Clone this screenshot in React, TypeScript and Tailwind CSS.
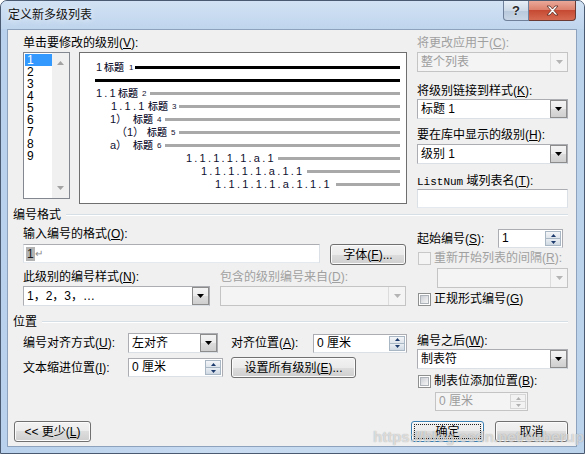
import React from "react";
import clsx from "clsx";

function K({ c }: { c: string }) {
  return (
    <>
      (<u>{c}</u>)
    </>
  );
}

function Label({ children, dim }: { children: React.ReactNode; dim?: boolean }) {
  return (
    <div className={clsx("h-[14px] whitespace-nowrap leading-[14px]", dim && "text-[#a0a0a0]")}>{children}</div>
  );
}

function DropBtn({ disabled }: { disabled?: boolean }) {
  if (disabled)
    return (
      <div className="flex w-[17px] items-center justify-center border-l border-[#dcdcdc]">
        <svg width="7" height="4">
          <path d="M0 0h7L3.5 4z" fill="#b4b4b4" />
        </svg>
      </div>
    );
  return (
    <div className="flex w-[17px] items-center justify-center border border-[#8c8c8c] bg-[linear-gradient(#f4f4f4_0%,#ebebeb_50%,#dddddd_50%,#cfcfcf_100%)]">
      <svg width="7" height="4">
        <path d="M0 0h7L3.5 4z" fill="#000" />
      </svg>
    </div>
  );
}

function Combo({ w, text, disabled }: { w: string; text?: React.ReactNode; disabled?: boolean }) {
  return (
    <div
      className={clsx(
        "flex h-[20px] border",
        w,
        disabled ? "border-[#c4c4c4] bg-[#f4f4f4] text-[#9c9c9c]" : "border-[#abadb3] border-b-[#dbdfe6] bg-white"
      )}
    >
      <div className="flex-1 whitespace-nowrap pl-[3px] leading-[18px]">{text}</div>
      <DropBtn disabled={disabled} />
    </div>
  );
}

function Spin({ w, text, disabled }: { w: string; text: string; disabled?: boolean }) {
  const arrow = disabled ? "#b0b0b0" : "#1c3a6c";
  return (
    <div
      className={clsx(
        "flex h-[19px] border",
        w,
        disabled ? "border-[#c4c4c4] bg-[#f4f4f4] text-[#9c9c9c]" : "border-[#abadb3] border-b-[#dbdfe6] bg-white"
      )}
    >
      <div className="flex-1 whitespace-nowrap pl-[3px] leading-[17px]">{text}</div>
      <div className="mr-px flex w-[16px] flex-col py-px">
        <div
          className={clsx(
            "flex flex-1 items-center justify-center border",
            disabled ? "border-[#d6d6d6] bg-[#f2f2f2]" : "border-[#a9b6c4] bg-[linear-gradient(#f4f6f8,#dfe5ec)]"
          )}
        >
          <svg width="5" height="3">
            <path d="M0 3h5L2.5 0z" fill={arrow} />
          </svg>
        </div>
        <div
          className={clsx(
            "flex flex-1 items-center justify-center border border-t-0",
            disabled ? "border-[#d6d6d6] bg-[#f2f2f2]" : "border-[#a9b6c4] bg-[linear-gradient(#e9eef3,#cfd8e2)]"
          )}
        >
          <svg width="5" height="3">
            <path d="M0 0h5L2.5 3z" fill={arrow} />
          </svg>
        </div>
      </div>
    </div>
  );
}

function TextBox({ w, h, children }: { w: string; h: string; children?: React.ReactNode }) {
  return (
    <div className={clsx("flex items-center border border-[#abadb3] border-b-[#e3e9ef] border-x-[#dbdfe6] bg-white pl-[2px]", w, h)}>
      {children}
    </div>
  );
}

function Btn({ w, children, def }: { w: string; children: React.ReactNode; def?: boolean }) {
  return (
    <div
      className={clsx(
        "flex h-[21px] items-center justify-center rounded-[3px] border p-[2px] bg-[linear-gradient(#f2f2f2_0%,#ebebeb_50%,#dddddd_50%,#cfcfcf_100%)] shadow-[inset_0_0_0_1px_#fbfbfb]",
        w,
        def ? "border-[#3c7fb1] shadow-[inset_0_0_0_1px_#48d2fb]" : "border-[#707070]"
      )}
    >
      <div
        className={clsx(
          "flex h-full w-full items-center justify-center whitespace-nowrap leading-none",
          def && "border border-dotted border-[#222]"
        )}
      >
        {children}
      </div>
    </div>
  );
}

function Check({ disabled, children }: { disabled?: boolean; children: React.ReactNode }) {
  return (
    <div className={clsx("flex h-[14px] items-center", disabled && "text-[#a0a0a0]")}>
      <div
        className={clsx(
          "ml-px mr-[3px] flex h-[13px] w-[13px] items-center justify-center border",
          disabled ? "border-[#c8c8c8] bg-[#f4f4f4]" : "border-[#8e8f8f] bg-white"
        )}
      >
        {!disabled && <div className="h-[9px] w-[9px] border border-[#aeb3b9] bg-[linear-gradient(135deg,#cbcfd5,#f6f6f6)]" />}
      </div>
      <span className="whitespace-nowrap leading-[14px]">{children}</span>
    </div>
  );
}

function SectionHead({ title }: { title: string }) {
  return (
    <div className="flex h-[14px] items-center pl-[5px] pr-[8px]">
      <span className="whitespace-nowrap leading-[14px]">{title}</span>
      <div className="ml-[5px] h-[2px] flex-1 border-b border-t border-b-white border-t-[#d5dfe5]" />
    </div>
  );
}

function Row({ pl, num, numW, sub, subW, title, paren, line = "gray" }: {
  pl: string; num?: string; numW?: string; sub?: string; subW?: string; title?: boolean; paren?: boolean; line?: "gray" | "black";
}) {
  return (
    <div className={clsx("flex h-[13px] items-center pr-[6px]", pl)}>
      {num && (
        <span
          className={clsx(
            "shrink-0 whitespace-nowrap text-[11px] leading-[13px] text-[#101030]",
            paren ? "tracking-normal" : "tracking-[2.2px]",
            numW
          )}
        >
          {num}
        </span>
      )}
      {title && (
        <span className="w-[24px] shrink-0 whitespace-nowrap text-[10px] font-medium leading-[13px] text-[#101030]">标题</span>
      )}
      {sub && <span className={clsx("shrink-0 text-[8px] leading-[13px] text-[#101030]", subW)}>{sub}</span>}
      <div className={clsx("h-[3px] flex-1", line === "black" ? "bg-black" : "bg-[#a9a9a9]")} />
    </div>
  );
}

export default function App() {
  return (
    <div className="relative flex h-[454px] w-[585px] flex-col overflow-hidden rounded-t-[7px] border border-[#4a5a70] bg-[linear-gradient(90deg,#b9d1ec,#c9dcf1_40%,#bcd3ec)] font-['Liberation_Sans','Noto_Sans_CJK_SC',sans-serif] text-[12px] text-black">
      {/* title bar */}
      <div className="flex h-[28px] shrink-0 bg-[linear-gradient(#d2e2f4,#bfd5ed)]">
        <div className="pl-[7px] pt-[6px] text-[12px] leading-[16px] text-[#111] [text-shadow:0_0_6px_#fff]">定义新多级列表</div>
        <div className="ml-auto mr-[8px] flex h-[20px]">
          <div className="flex w-[26px] items-center justify-center rounded-bl-[4px] border border-t-0 border-[#6f819a] bg-[linear-gradient(#e6eef7,#cdd9e7_50%,#b8c9dc_51%,#c8d6e6)] text-[13px] font-bold leading-none text-[#2a2a2a] [text-shadow:0_0_2px_#fff]">
            ?
          </div>
          <div className="flex w-[47px] items-center justify-center rounded-br-[4px] border border-l-0 border-t-0 border-[#6b3b33] bg-[linear-gradient(#eaa899,#db7f6b_48%,#c64a33_50%,#d66a52)]">
            <svg width="13" height="11" viewBox="0 0 13 11">
              <path d="M1 1h3l2.5 3L9 1h3L8 5.5 12 10H9L6.5 7 4 10H1l4-4.5z" fill="#fff" stroke="#5a2a22" strokeWidth="0.8" />
            </svg>
          </div>
        </div>
      </div>

      {/* client */}
      <div className="ml-[6px] flex h-[418px] w-[570px] flex-col border border-[#8da2bc] bg-[#f0f0f0]">
        {/* top section */}
        <div className="flex pl-[15px] pt-[6px]">
          <div className="w-[384px]">
            <Label>
              单击要修改的级别<K c="V" />:
            </Label>
            <div className="mt-[2px] flex gap-[9px]">
              <div className="flex h-[147px] w-[47px] border border-[#828790] bg-white">
                <div className="flex-1 pl-px pt-px">
                  {["1", "2", "3", "4", "5", "6", "7", "8", "9"].map((n) => (
                    <div
                      key={n}
                      className={clsx("h-[12px] pl-[2px] leading-[12px]", n === "1" && "bg-[#3399ff] text-white")}
                    >
                      {n}
                    </div>
                  ))}
                </div>
                <div className="flex w-[17px] flex-col items-center justify-between bg-[#f0f0f0] py-[8px]">
                  <svg width="7" height="4">
                    <path d="M0 4h7L3.5 0z" fill="#a3a3a3" />
                  </svg>
                  <svg width="7" height="4">
                    <path d="M0 0h7L3.5 4z" fill="#a3a3a3" />
                  </svg>
                </div>
              </div>
              <div className="h-[152px] w-[328px] border border-[#6f6f6f] bg-white pt-[8px]">
                <Row pl="pl-[16px]" num="1" numW="w-[8px]" title sub="1" subW="w-[7px] pl-[1px]" line="black" />
                <Row pl="pl-[15px]" line="black" />
                <Row pl="pl-[16px]" num="1.1" numW="w-[22px]" title sub="2" subW="w-[8px]" />
                <Row pl="pl-[31px]" num="1.1.1" numW="w-[37px]" title sub="3" subW="w-[7px]" />
                <Row pl="pl-[30px]" num="1）" numW="w-[23px]" paren title sub="4" subW="w-[8px]" />
                <Row pl="pl-[36px]" num="（1）" numW="w-[31px]" paren title sub="5" subW="w-[8px]" />
                <Row pl="pl-[30px]" num="a）" numW="w-[23px]" paren title sub="6" subW="w-[8px]" />
                <Row pl="pl-[106px]" num="1.1.1.1.1.a.1" numW="w-[92px]" />
                <Row pl="pl-[121px]" num="1.1.1.1.1.a.1.1" numW="w-[106px]" />
                <Row pl="pl-[135px]" num="1.1.1.1.1.a.1.1.1" numW="w-[121px]" />
              </div>
            </div>
          </div>
          <div className="ml-[10px] w-[151px]">
            <Label dim>
              将更改应用于<K c="C" />:
            </Label>
            <div className="mt-[2px]">
              <Combo w="w-[151px]" text="整个列表" disabled />
            </div>
            <div className="mt-[12px]">
              <Label>
                将级别链接到样式<K c="K" />:
              </Label>
            </div>
            <div className="mt-px">
              <Combo w="w-[151px]" text="标题 1" />
            </div>
            <div className="mt-[9px]">
              <Label>
                要在库中显示的级别<K c="H" />:
              </Label>
            </div>
            <div className="mt-[2px]">
              <Combo w="w-[151px]" text="级别 1" />
            </div>
            <div className="mt-[10px]">
              <Label>
                <span className="font-['Liberation_Mono'] text-[11px]">ListNum</span> 域列表名<K c="T" />:
              </Label>
            </div>
            <div className="mt-px">
              <TextBox w="w-[151px]" h="h-[19px]" />
            </div>
          </div>
        </div>

        <SectionHead title="编号格式" />

        {/* numbering format */}
        <div className="flex pl-[15px]">
          <div className="w-[384px]">
            <div className="mt-[5px]">
              <Label>
                输入编号的格式<K c="O" />:
              </Label>
            </div>
            <div className="mt-[3px] flex gap-[10px]">
              <TextBox w="w-[297px]" h="h-[19px]">
                <span className="bg-[#b3b3b3] px-px leading-[14px] text-[#1a1a1a]">1</span>
                <span className="text-[10px] leading-[14px] text-[#8a8a8a]">↵</span>
              </TextBox>
              <Btn w="w-[76px]">
                字体<K c="F" />...
              </Btn>
            </div>
            <div className="mt-[5px] flex">
              <div className="w-[197px]">
                <Label>
                  此级别的编号样式<K c="N" />:
                </Label>
              </div>
              <Label dim>
                包含的级别编号来自<K c="D" />:
              </Label>
            </div>
            <div className="mt-[2px] flex gap-[10px]">
              <Combo w="w-[187px]" text="1，2，3，…" />
              <Combo w="w-[186px]" disabled />
            </div>
          </div>
          <div className="ml-[10px] w-[151px]">
            <div className="mt-[7px] flex items-center">
              <div className="w-[81px]">
                <Label>
                  起始编号<K c="S" />:
                </Label>
              </div>
              <Spin w="w-[65px]" text="1" />
            </div>
            <div className="mt-[3px]">
              <Check disabled>
                重新开始列表的间隔<K c="R" />:
              </Check>
            </div>
            <div className="ml-[20px] mt-[3px]">
              <Combo w="w-[131px]" disabled />
            </div>
            <div className="mt-[4px]">
              <Check>
                正规形式编号<K c="G" />
              </Check>
            </div>
          </div>
        </div>

        <div className="mt-[9px]">
          <SectionHead title="位置" />
        </div>

        {/* position */}
        <div className="flex pl-[15px]">
          <div className="w-[384px]">
            <div className="mt-[4px] flex items-center">
              <div className="w-[105px]">
                <Label>
                  编号对齐方式<K c="U" />:
                </Label>
              </div>
              <Combo w="w-[90px]" text="左对齐" />
              <div className="ml-[13px] w-[82px]">
                <Label>
                  对齐位置<K c="A" />:
                </Label>
              </div>
              <Spin w="w-[94px]" text="0 厘米" />
            </div>
            <div className="mt-[4px] flex items-center">
              <div className="w-[105px]">
                <Label>
                  文本缩进位置<K c="I" />:
                </Label>
              </div>
              <Spin w="w-[95px]" text="0 厘米" />
              <div className="ml-[8px]">
                <Btn w="w-[125px]">
                  设置所有级别<K c="E" />...
                </Btn>
              </div>
            </div>
          </div>
          <div className="ml-[10px] w-[151px]">
            <div className="mt-[5px]">
              <Label>
                编号之后<K c="W" />:
              </Label>
            </div>
            <div className="mt-px">
              <Combo w="w-[151px]" text="制表符" />
            </div>
            <div className="mt-[5px]">
              <Check>
                制表位添加位置<K c="B" />:
              </Check>
            </div>
            <div className="ml-[18px] mt-[4px]">
              <Spin w="w-[93px]" text="0 厘米" disabled />
            </div>
          </div>
        </div>

        {/* buttons */}
        <div className="mt-[10px] flex pl-[6px] pr-[8px]">
          <Btn w="w-[77px]">
            &lt;&lt; 更少<K c="L" />
          </Btn>
          <div className="ml-auto flex gap-[11px]">
            <Btn w="w-[73px]" def>
              确定
            </Btn>
            <Btn w="w-[73px]">取消</Btn>
          </div>
        </div>
      </div>

      <span className="pointer-events-none absolute left-[372px] top-[425px] whitespace-nowrap text-[15px] font-bold text-white/60 [text-shadow:0_0_1px_rgba(0,0,0,0.35)]">
        https://blog.csdn.net/cuberup
      </span>
    </div>
  );
}
